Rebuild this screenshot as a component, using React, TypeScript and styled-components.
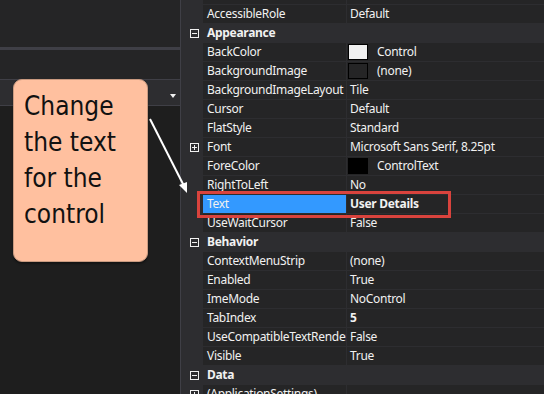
import React from "react";
import styled, { createGlobalStyle } from "styled-components";

const GlobalStyle = createGlobalStyle`
  html, body {
    margin: 0;
    padding: 0;
    background: #1e1e1e;
  }
  body {
    font-family: "Noto Sans", "Open Sans", sans-serif;
  }
`;

type Row =
  | { kind: "cat"; label: string }
  | {
      kind: "prop";
      name: string;
      value: string;
      swatch?: string;
      bold?: boolean;
      selected?: boolean;
      expander?: boolean;
    };

// first row is scrolled almost out of view, only its bottom edge shows
const rows: Row[] = [
  { kind: "prop", name: "", value: "" },
  { kind: "prop", name: "AccessibleRole", value: "Default" },
  { kind: "cat", label: "Appearance" },
  { kind: "prop", name: "BackColor", value: "Control", swatch: "#f0f0f0" },
  { kind: "prop", name: "BackgroundImage", value: "(none)", swatch: "#252526" },
  { kind: "prop", name: "BackgroundImageLayout", value: "Tile" },
  { kind: "prop", name: "Cursor", value: "Default" },
  { kind: "prop", name: "FlatStyle", value: "Standard" },
  { kind: "prop", name: "Font", value: "Microsoft Sans Serif, 8.25pt", expander: true },
  { kind: "prop", name: "ForeColor", value: "ControlText", swatch: "#000000" },
  { kind: "prop", name: "RightToLeft", value: "No" },
  { kind: "prop", name: "Text", value: "User Details", bold: true, selected: true },
  { kind: "prop", name: "UseWaitCursor", value: "False" },
  { kind: "cat", label: "Behavior" },
  { kind: "prop", name: "ContextMenuStrip", value: "(none)" },
  { kind: "prop", name: "Enabled", value: "True" },
  { kind: "prop", name: "ImeMode", value: "NoControl" },
  { kind: "prop", name: "TabIndex", value: "5", bold: true },
  { kind: "prop", name: "UseCompatibleTextRendering", value: "False" },
  { kind: "prop", name: "Visible", value: "True" },
  { kind: "cat", label: "Data" },
  { kind: "prop", name: "(ApplicationSettings)", value: "", expander: true },
];

const Expander: React.FC<{ open: boolean }> = ({ open }) => (
  <svg width="9" height="9" viewBox="0 0 9 9">
    <rect x="0.5" y="0.5" width="8" height="8" fill="none" stroke="#f1f1f1" />
    <line x1="2" y1="4.5" x2="7" y2="4.5" stroke="#f1f1f1" />
    {!open && <line x1="4.5" y1="2" x2="4.5" y2="7" stroke="#f1f1f1" />}
  </svg>
);

const App: React.FC = () => {
  return (
    <>
      <GlobalStyle />
      <Screen>
        <LeftPanel>
          <TopPane />
          <Splitter />
          <MidPane />
          <ComboBar>
            <DropArrow />
          </ComboBar>
          <EditorArea />
        </LeftPanel>

        <PropertyGrid>
          {rows.map((row, i) =>
            row.kind === "cat" ? (
              <GridRow key={i}>
                <Gutter>
                  <Expander open />
                </Gutter>
                <CategoryLabel>{row.label}</CategoryLabel>
              </GridRow>
            ) : (
              <GridRow key={i}>
                <Gutter>{row.expander && <Expander open={false} />}</Gutter>
                <NameCell $selected={row.selected}>{row.name}</NameCell>
                <ValueCell $bold={row.bold}>
                  {row.swatch && <Swatch $color={row.swatch} />}
                  {row.value}
                </ValueCell>
              </GridRow>
            )
          )}
        </PropertyGrid>

        <StickyNote>
          Change
          <br />
          the text
          <br />
          for the
          <br />
          control
        </StickyNote>

        <Highlight />

        <ArrowLayer width="544" height="394" viewBox="0 0 544 394">
          <line x1="150" y1="119" x2="184" y2="186" stroke="#ffffff" strokeWidth="2" />
          <polygon points="187,193 179,185 187,182" fill="#ffffff" />
        </ArrowLayer>
      </Screen>
    </>
  );
};

export default App;

const Screen = styled.div`
  position: relative;
  display: flex;
  width: 544px;
  height: 394px;
  overflow: hidden;
  background: #2d2d30;
`;

const LeftPanel = styled.div`
  width: 180px;
  flex: none;
  display: flex;
  flex-direction: column;
  background: #252526;
  border-right: 1px solid #3f3f46;
`;

const TopPane = styled.div`
  height: 47px;
`;

const Splitter = styled.div`
  height: 3px;
  background: #3f3f46;
`;

const MidPane = styled.div`
  height: 29px;
  border-bottom: 1px solid #3f3f46;
`;

const ComboBar = styled.div`
  height: 26px;
  background: #2d2d30;
  border-bottom: 1px solid #3f3f46;
  display: flex;
  justify-content: flex-end;
  align-items: flex-end;
  padding: 0 4px 7px 0;
  box-sizing: border-box;
`;

const DropArrow = styled.div`
  width: 0;
  height: 0;
  border-left: 3.5px solid transparent;
  border-right: 3.5px solid transparent;
  border-top: 4px solid #f1f1f1;
`;

const EditorArea = styled.div`
  flex: 1;
  background: #1e1e1e;
`;

const PropertyGrid = styled.div`
  flex: 1;
  display: flex;
  flex-direction: column;
  gap: 1px;
  margin-top: -14px;
  font-size: 12px;
  letter-spacing: -0.3px;
  color: #f1f1f1;
`;

const GridRow = styled.div`
  display: grid;
  grid-template-columns: 21px 143px 1fr;
  column-gap: 1px;
  height: 18px;
  line-height: 18px;
  flex: none;
`;

const Gutter = styled.div`
  display: flex;
  align-items: center;
  padding-left: 9px;
`;

const CategoryLabel = styled.div`
  grid-column: 2 / 4;
  padding-left: 4px;
  font-weight: 700;
`;

const NameCell = styled.div<{ $selected?: boolean }>`
  background: ${(p) => (p.$selected ? "#3399ff" : "#252526")};
  padding-left: 4px;
  white-space: nowrap;
  overflow: hidden;
`;

const ValueCell = styled.div<{ $bold?: boolean }>`
  background: #252526;
  padding-left: 3px;
  display: flex;
  align-items: center;
  white-space: nowrap;
  overflow: hidden;
  font-weight: ${(p) => (p.$bold ? 700 : 400)};
`;

const Swatch = styled.span<{ $color: string }>`
  width: 18px;
  height: 14px;
  flex: none;
  background: ${(p) => p.$color};
  border: 1px solid #000;
  margin: 0 9px 0 -2px;
`;

const StickyNote = styled.div`
  position: absolute;
  left: 13px;
  top: 79px;
  width: 135px;
  height: 183px;
  box-sizing: border-box;
  padding: 8px 0 0 10px;
  background: #ffc09f;
  border: 1px solid #c99a80;
  border-radius: 9px;
  box-shadow: 0 2px 2px rgba(0, 0, 0, 0.35);
  font-family: "DejaVu Sans Condensed", "DejaVu Sans", sans-serif;
  font-size: 26px;
  line-height: 36px;
  color: #111111;
`;

const Highlight = styled.div`
  position: absolute;
  left: 197px;
  top: 191px;
  width: 254px;
  height: 27px;
  box-sizing: border-box;
  border: 3px solid #d9433d;
  pointer-events: none;
`;

const ArrowLayer = styled.svg`
  position: absolute;
  left: 0;
  top: 0;
  pointer-events: none;
`;
